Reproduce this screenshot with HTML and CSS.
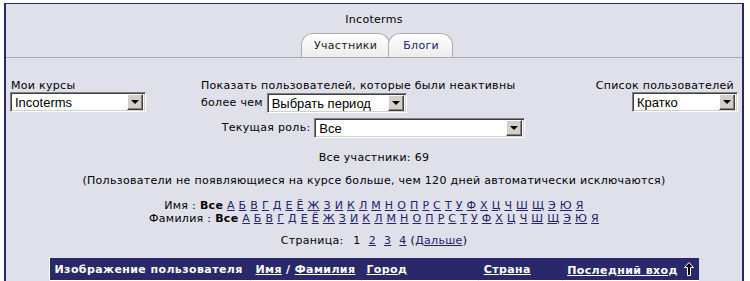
FILE: index.html
```html
<!DOCTYPE html>
<html lang="ru">

<head>
    <meta charset="UTF-8">
    <title>Incoterms: Участники</title>
    <link rel="stylesheet" href="styles.css">
</head>

<body>
    <div id="course-box">
        <div class="course-name">Incoterms</div>

        <div class="tabs">
            <span class="tab active">Участники</span>
            <a class="tab" href="#">Блоги</a>
        </div>

        <div class="controls">
            <div class="ctrl-left">
                <div>Мои курсы</div>
                <span class="select w-course"><span class="value">Incoterms</span><span class="arrow"></span></span>
            </div>
            <div class="ctrl-center">
                <div>Показать пользователей, которые были неактивны</div>
                <div>более чем <span class="select w-period"><span class="value">Выбрать период</span><span class="arrow"></span></span></div>
            </div>
            <div class="ctrl-right">
                <div>Список пользователей</div>
                <span class="select w-mode"><span class="value">Кратко</span><span class="arrow"></span></span>
            </div>
        </div>

        <div class="role-row">
            Текущая роль: <span class="select w-role"><span class="value">Все</span><span class="arrow"></span></span>
        </div>

        <div class="total">Все участники: 69</div>
        <div class="note">(Пользователи не появляющиеся на курсе больше, чем 120 дней автоматически исключаются)</div>

        <div class="initials">
            <div id="first-initials">Имя : <b>Все</b></div>
            <div id="last-initials">Фамилия : <b>Все</b></div>
        </div>

        <div class="paging">Страница: <span class="current">1</span><a href="#">2</a><a href="#">3</a><a href="#">4</a>(<a class="next" href="#">Дальше</a>)</div>

        <table class="participants">
            <tr>
                <th class="c-pic">Изображение пользователя</th>
                <th class="c-name"><a href="#">Имя</a> / <a href="#">Фамилия</a></th>
                <th class="c-city"><a href="#">Город</a></th>
                <th class="c-country"><a href="#">Страна</a></th>
                <th class="c-access"><a href="#">Последний вход</a>
                    <svg class="sort-icon" width="10" height="14" viewBox="0 0 10 14">
                        <path d="M5 0.5 L9.5 5.5 L6.5 5.5 L6.5 13.5 L3.5 13.5 L3.5 5.5 L0.5 5.5 Z" fill="#000" stroke="#fff" stroke-width="1"/>
                    </svg>
                </th>
            </tr>
            <tr>
                <td></td><td></td><td></td><td></td><td></td>
            </tr>
        </table>
    </div>

    <script>
        const letters = 'А Б В Г Д Е Ё Ж З И К Л М Н О П Р С Т У Ф Х Ц Ч Ш Щ Э Ю Я'.split(' ');
        ['first-initials', 'last-initials'].forEach(id => {
            const row = document.getElementById(id);
            letters.forEach(letter => {
                const link = document.createElement('a');
                link.href = '#';
                link.textContent = letter;
                row.appendChild(document.createTextNode(' '));
                row.appendChild(link);
            });
        });
    </script>
</body>

</html>
```

FILE: styles.css
```css
body {
    margin: 0;
    padding-top: 3px;
    background: #fff;
    font-family: "DejaVu Sans", Verdana, sans-serif;
    font-size: 11px;
    letter-spacing: 0.3px;
    color: #000;
    overflow: hidden;
}

a {
    color: #22226e;
}

#course-box {
    margin: 0 6px 0 4px;
    height: 300px;
    background: #dfe0ea;
    border: 1px solid #29286a;
    border-width: 1px 2px 0 2px;
}

.course-name {
    text-align: center;
    padding-top: 9px;
    line-height: 13px;
}

.tabs {
    display: flex;
    justify-content: center;
    margin-top: 6px;
    padding-left: 6px;
    border-bottom: 1px solid #a9a9b0;
    height: 25px;
}

.tab {
    display: block;
    height: 23px;
    line-height: 24px;
    padding: 0 12px;
    margin-top: 1px;
    background: linear-gradient(#ffffff, #ececec);
    border: 1px solid #aeaeae;
    border-bottom: none;
    border-radius: 12px 12px 0 0;
    color: #222;
    text-decoration: none;
}

.tab + .tab {
    margin-left: -2px;
    color: #22226e;
    padding: 0 13px 0 14px;
}

.controls {
    display: flex;
    padding: 21px 4px 0 5px;
    line-height: 13px;
}

.ctrl-left {
    width: 190px;
}

.ctrl-center {
    flex: 1;
}

.ctrl-center > div:first-child {
    margin-bottom: 1px;
}

.ctrl-right {
    text-align: right;
}

.ctrl-right > div {
    padding-right: 4px;
}

.select {
    display: inline-flex;
    align-items: center;
    vertical-align: middle;
    box-sizing: border-box;
    height: 20px;
    background: #fff;
    border: 1px solid;
    border-color: #808080 #fff #fff #808080;
    box-shadow: inset 1px 1px #404040, inset -1px -1px #d4d0c8;
    padding: 2px;
    font-family: "Liberation Sans", Arial, sans-serif;
    font-size: 13px;
    letter-spacing: 0;
    text-align: left;
}

.ctrl-left .select,
.ctrl-right .select {
    vertical-align: top;
}

.ctrl-left .select {
    margin-left: -1px;
}

.select .value {
    flex: 1;
    padding-left: 2px;
    white-space: nowrap;
}

.select .arrow {
    position: relative;
    box-sizing: border-box;
    width: 16px;
    height: 16px;
    background: #d4d0c8;
    border: 1px solid;
    border-color: #fff #404040 #404040 #fff;
    box-shadow: inset -1px -1px #808080;
}

.select .arrow::after {
    content: "";
    position: absolute;
    left: 3px;
    top: 5px;
    border-style: solid;
    border-width: 4px 4px 0 4px;
    border-color: #000 transparent transparent transparent;
}

.w-course {
    width: 136px;
}

.w-period {
    width: 140px;
}

.w-mode {
    width: 106px;
}

.w-role {
    width: 211px;
}

.role-row {
    text-align: center;
    margin-top: 5px;
    padding-right: 1px;
}

.total {
    text-align: center;
    margin-top: 13px;
    line-height: 13px;
}

.note {
    text-align: center;
    margin-top: 10px;
    line-height: 13px;
}

.initials {
    text-align: center;
    margin-top: 12px;
    line-height: 13px;
}

.paging {
    text-align: center;
    margin-top: 9px;
    line-height: 13px;
}

.paging .current,
.paging a {
    margin: 0 4px;
}

.paging .current {
    margin-left: 6px;
}

.paging .next {
    margin: 0;
}

.participants {
    margin: 11px auto 0;
    width: 650px;
    border-collapse: collapse;
    background: #fff;
}

.participants th {
    background: #29286a;
    color: #fff;
    text-align: left;
    font-weight: bold;
    height: 22px;
    padding: 0 5px;
    letter-spacing: 0.4px;
    white-space: nowrap;
}

.participants th a {
    color: #fff;
}

.participants td {
    height: 20px;
    border-left: 1px solid #e4e4e4;
}

.c-pic {
    width: 191px;
}

.c-name {
    width: 101px;
}

.c-city {
    width: 109px;
}

.c-country {
    width: 74px;
}

.sort-icon {
    vertical-align: -2px;
    margin-left: 2px;
}
```
